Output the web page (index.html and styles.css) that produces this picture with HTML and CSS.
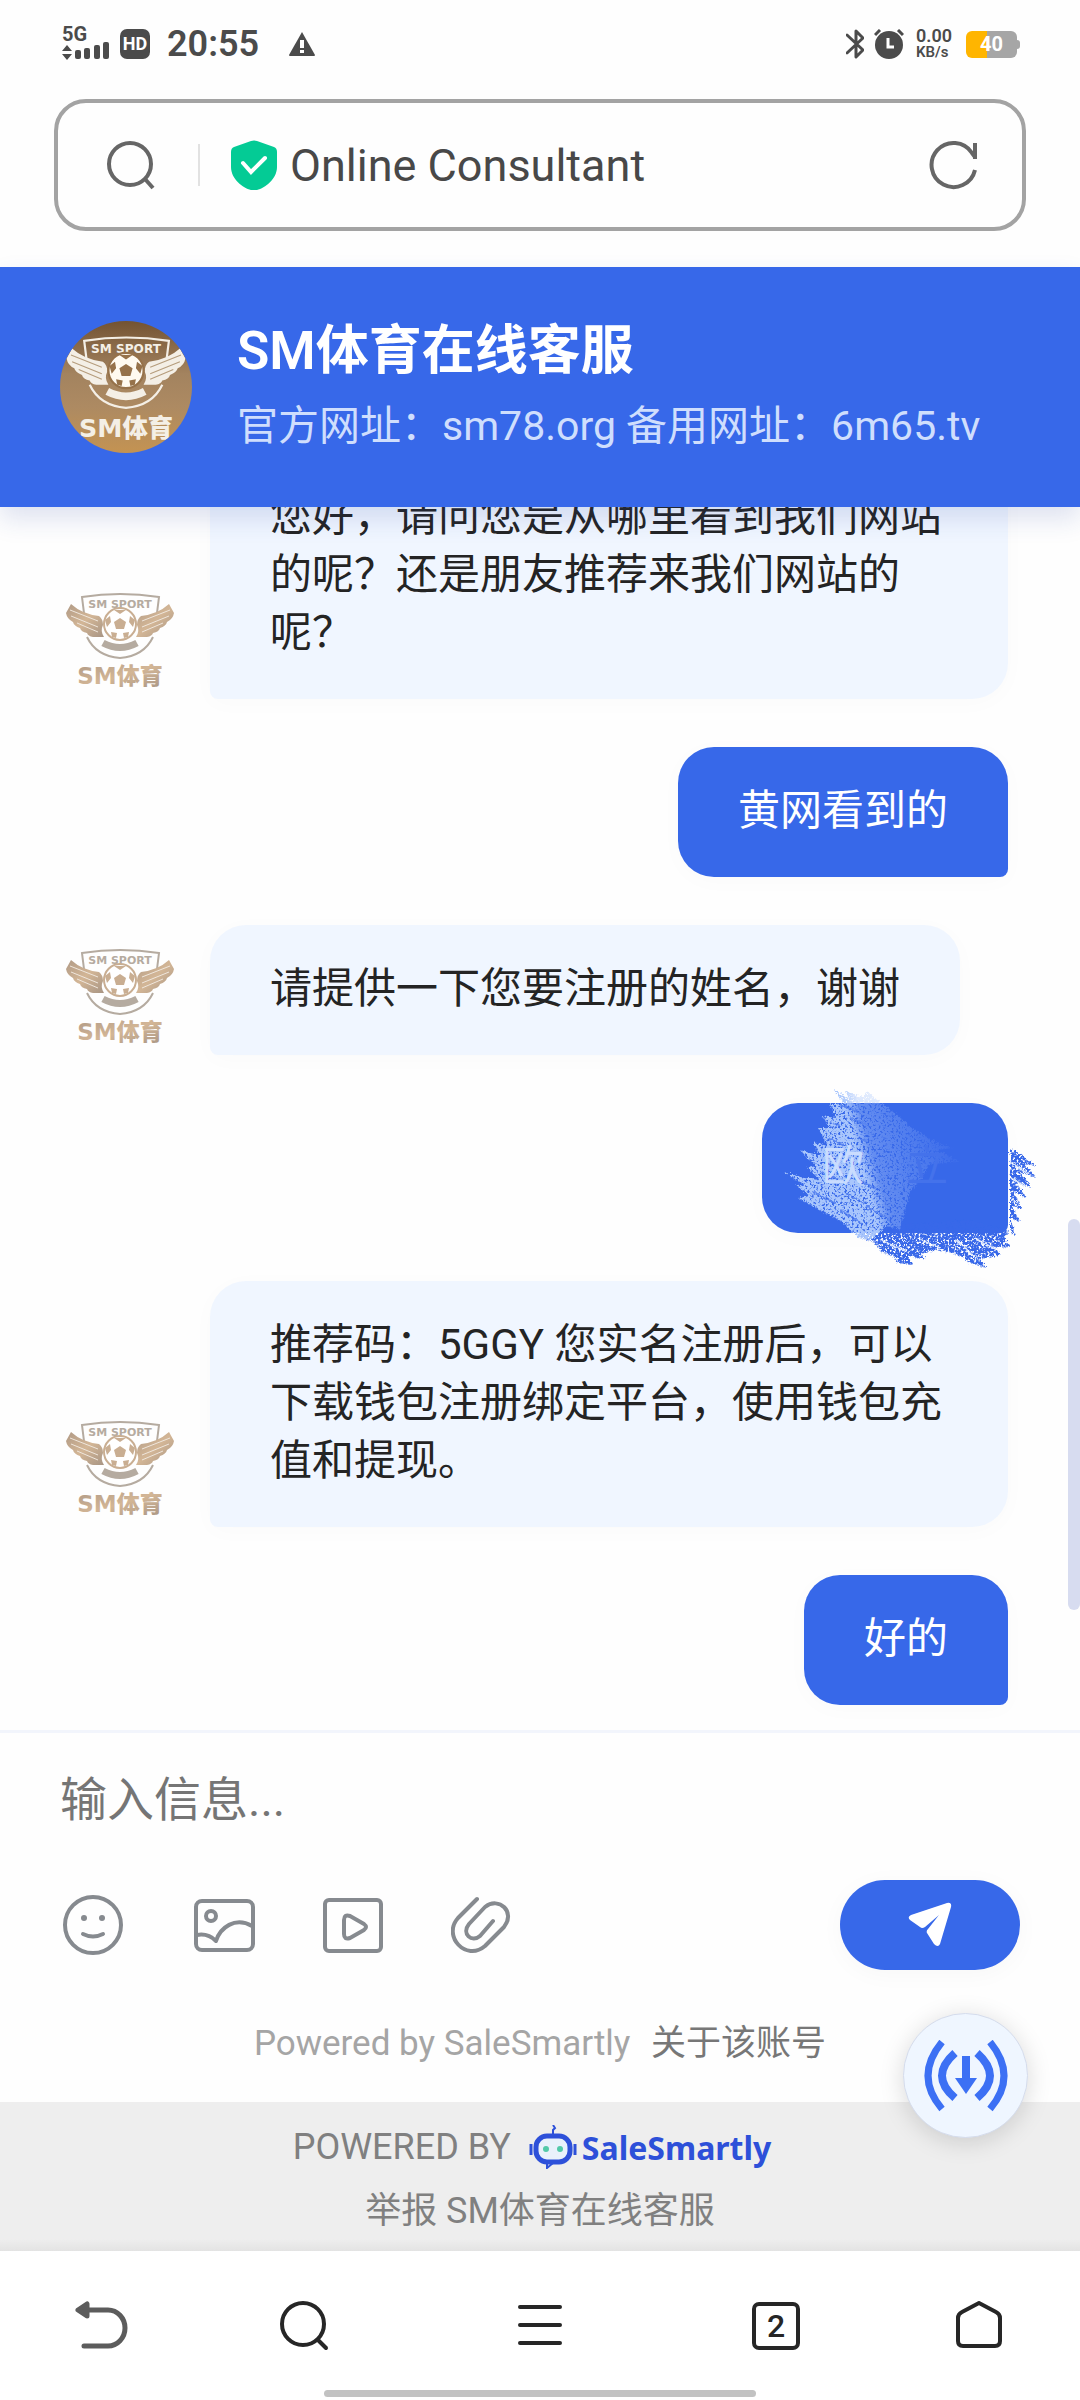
FILE: index.html
```html
<!DOCTYPE html>
<html lang="zh-CN">
<head>
  <meta charset="UTF-8">
  <meta name="viewport" content="width=device-width, initial-scale=1.0">
  <title>Online Consultant</title>
  <link rel="stylesheet" href="styles.css">
</head>
<body>
  <!-- shared club logo -->
  <svg class="defs" aria-hidden="true">
    <defs>
      <linearGradient id="gold" x1="0" y1="0" x2="1" y2="1">
        <stop offset="0" stop-color="#b09a86"/>
        <stop offset="0.5" stop-color="#d3b696"/>
        <stop offset="1" stop-color="#a89584"/>
      </linearGradient>
      <symbol id="club-logo" viewBox="0 0 120 120">
        <path class="logo-line" d="M24 34L22 18Q60 12 99 18L97 34M27 58Q36 77 60 79Q84 77 93 58"/>
        <text class="logo-sport" x="60" y="29" text-anchor="middle">SM SPORT</text>
        <path class="logo-fill" d="M11 25Q22 35 39 37Q43 40 43 46Q40 52 44 58L33 58Q28 57 27 54Q21 53 20 49Q14 47 13 43Q7 40 6 34Z"/>
        <path class="logo-fill" d="M109 25Q98 35 81 37Q77 40 77 46Q80 52 76 58L87 58Q92 57 93 54Q99 53 100 49Q106 47 107 43Q113 40 114 34Z"/>
        <path class="logo-feather" d="M10 31L38 42M11 37L38 48M17 44L38 53M110 31L82 42M109 37L82 48M103 44L82 53"/>
        <circle class="logo-ball" cx="60" cy="45" r="16"/>
        <path class="logo-patch" d="M60 39L66 43L64 50H56L54 43ZM54 31H66L60 35ZM45 41L50 37L51 43L47 48ZM75 41L70 37L69 43L73 48ZM51 53L57 54L56 59L52 58ZM69 53L63 54L64 59L68 58Z"/>
        <path class="logo-banner" d="M43 64Q60 73 77 64"/>
        <text class="logo-name" x="60" y="105" text-anchor="middle">SM体育</text>
      </symbol>
    </defs>
  </svg>

  <div class="page">
    <div class="status-bar">
      <div class="status-left">
        <svg width="48" height="46" viewBox="0 -6 48 46" aria-label="5G">
          <text class="net-type" x="0" y="14">5G</text>
          <path d="M0 24L5 18L10 24ZM0 27H10L5 33Z"/>
          <rect x="13" y="23" width="6" height="9" rx="2"/>
          <rect x="22" y="21" width="6" height="11" rx="2"/>
          <rect x="32" y="18" width="6" height="14" rx="2"/>
          <rect x="41" y="15" width="6" height="17" rx="2"/>
        </svg>
        <span class="hd">HD</span>
        <span class="time">20:55</span>
        <svg class="warn" width="26" height="24" viewBox="0 0 26 24">
          <path d="M13 0L26 23Q26 24 25 24H1Q0 24 0 23Z"/>
          <path d="M13 8V16M13 18V21" stroke="#fff" stroke-width="4"/>
        </svg>
      </div>
      <div class="status-right">
        <svg width="18" height="30" viewBox="0 0 18 30">
          <path d="M1 6L17 21L10 28V2L17 9L1 24" fill="none" stroke="#4b4b4b" stroke-width="3" stroke-linejoin="round" stroke-linecap="round"/>
        </svg>
        <svg width="30" height="30" viewBox="0 0 30 30">
          <circle cx="15" cy="16" r="14"/>
          <path d="M1 6L6 1M29 6L24 1" stroke="#4b4b4b" stroke-width="3"/>
          <path d="M14 9V18H20" fill="none" stroke="#fff" stroke-width="3"/>
        </svg>
        <span class="speed"><b>0.00</b><b class="unit">KB/s</b></span>
        <span class="battery">40</span>
      </div>
    </div>

    <div class="address-bar">
      <svg width="50" height="50" viewBox="0 0 50 50" class="line-icon">
        <circle cx="24" cy="24" r="21"/>
        <path d="M39 39L47 48"/>
      </svg>
      <span class="divider"></span>
      <svg width="46" height="50" viewBox="0 0 46 50">
        <path d="M20 1Q23 0 26 1L43 7Q46 8 46 12V27C46 39 34 48 26 50Q23 51 20 50C12 48 0 39 0 27V12Q0 8 3 7Z" fill="#04cb95"/>
        <path d="M12 23L20 32L34 18" fill="none" stroke="#fff" stroke-width="4" stroke-linecap="round"/>
      </svg>
      <span class="site-title">Online Consultant</span>
      <button class="icon-btn" type="button" aria-label="Reload">
        <svg width="50" height="50" viewBox="0 0 50 50" class="line-icon">
          <path d="M46 30A22 22 0 1 1 43 13L46 17M46 3V19"/>
        </svg>
      </button>
    </div>

    <header class="chat-header">
      <span class="avatar avatar-large"><svg viewBox="0 0 120 120"><use href="#club-logo"/></svg></span>
      <div>
        <h1>SM体育在线客服</h1>
        <p>官方网址：sm78.org 备用网址：6m65.tv</p>
      </div>
    </header>

    <main class="chat">
      <div class="message agent">
        <span class="avatar"><svg viewBox="0 0 120 120"><use href="#club-logo"/></svg></span>
        <p class="bubble">您好，请问您是从哪里看到我们网站的呢？还是朋友推荐来我们网站的呢？</p>
      </div>
      <div class="message visitor">
        <p class="bubble">黄网看到的</p>
      </div>
      <div class="message agent">
        <span class="avatar"><svg viewBox="0 0 120 120"><use href="#club-logo"/></svg></span>
        <p class="bubble">请提供一下您要注册的姓名，谢谢</p>
      </div>
      <div class="message visitor">
        <p class="bubble scribbled">
          <svg class="scribble" width="280" height="195" viewBox="0 0 280 195" aria-hidden="true">
            <defs>
              <linearGradient id="fade" gradientUnits="userSpaceOnUse" x1="95" y1="100" x2="185" y2="75">
                <stop offset="0" stop-color="#a9c6fc"/>
                <stop offset="0.15" stop-color="#a9c6fc" stop-opacity="0.4"/>
                <stop offset="1" stop-color="#a9c6fc" stop-opacity="0.05"/>
              </linearGradient>
              <filter id="speckle" x="-10%" y="-10%" width="120%" height="120%">
                <feTurbulence type="fractalNoise" baseFrequency="0.45" numOctaves="2" seed="8" result="dots"/>
                <feColorMatrix in="dots" values="0 0 0 0 0  0 0 0 0 0  0 0 0 0 0  0 6 0 0 -1.9" result="mask"/>
                <feDisplacementMap in="SourceGraphic" in2="dots" scale="6" xChannelSelector="R" yChannelSelector="G" result="rough"/>
                <feComposite in="rough" in2="mask" operator="in"/>
              </filter>
            </defs>
            <!-- blue stroke running past the bubble -->
            <g filter="url(#speckle)">
              <path fill="#3768e9" d="M84 148L96 160L104 162L112 172L124 177L128 183L143 185L138 176L156 180L152 174L166 170L188 175L200 183L216 188L210 179L230 176L226 168L240 167L234 158L240 152V69L250 74L266 86L254 84L266 98L250 92L262 108L246 102L256 118L244 112L252 130L242 126L250 142L240 138L246 156L236 150L200 140Z"/>
              <path class="scratch light-scratch" d="M110 160L136 172M150 160L170 168M186 160L208 180M204 158L226 170M240 82L258 94M241 98L254 106M241 118L248 124"/>
            </g>
            <!-- pale stroke over the name -->
            <g filter="url(#speckle)">
              <path fill="url(#fade)" d="M63 9L78 18L76 11L92 17L97 11L112 24L126 34L140 46L158 58L182 68L168 70L190 82L160 84L150 100L140 112L130 150L118 146L100 160L88 158L72 142L50 130L28 118L40 116L24 104L36 106L13 92L34 98L50 100L38 88L46 86L30 70L50 76L42 62L58 66L48 48L60 48L52 36L66 38L60 24L74 24Z"/>
              <path class="scratch" d="M68 24L88 32M80 38L98 46M58 58L74 66M50 92L68 100M42 112L66 124M74 112L94 124M84 98L108 110M70 130L92 144M96 126L122 142M64 44L70 47M88 58L98 62M54 82L64 86"/>
            </g>
          </svg>
          <span class="smudged">欧<span class="hidden-name">　立</span></span>
        </p>
      </div>
      <div class="message agent">
        <span class="avatar"><svg viewBox="0 0 120 120"><use href="#club-logo"/></svg></span>
        <p class="bubble">推荐码：5GGY 您实名注册后，可以下载钱包注册绑定平台，使用钱包充值和提现。</p>
      </div>
      <div class="message visitor">
        <p class="bubble">好的</p>
      </div>
      <span class="scroll-thumb"></span>
    </main>

    <form class="composer">
      <input class="message-input" type="text" placeholder="输入信息..." aria-label="输入信息">
      <div class="tools">
        <button class="icon-btn" type="button" aria-label="表情">
          <svg width="64" height="64" viewBox="0 0 64 64" class="tool-icon">
            <circle cx="32" cy="32" r="28"/>
            <path d="M22 41Q32 46 42 41"/>
            <circle cx="23" cy="25" r="3" class="dot"/>
            <circle cx="41" cy="25" r="3" class="dot"/>
          </svg>
        </button>
        <button class="icon-btn" type="button" aria-label="图片">
          <svg width="64" height="64" viewBox="0 0 64 64" class="tool-icon">
            <rect x="5" y="8" width="57" height="49" rx="6"/>
            <circle cx="20" cy="23" r="5"/>
            <path d="M6 42Q17 40 25 48C29 35 44 23 61 33"/>
          </svg>
        </button>
        <button class="icon-btn" type="button" aria-label="视频">
          <svg width="64" height="64" viewBox="0 0 64 64" class="tool-icon">
            <rect x="4" y="7" width="56" height="51" rx="4"/>
            <path d="M23 27Q23 21 29 23L43 31Q47 34 43 37L29 45Q23 47 23 41Z"/>
          </svg>
        </button>
        <button class="icon-btn" type="button" aria-label="附件">
          <svg width="64" height="64" viewBox="0 0 64 64" class="tool-icon">
            <path d="M26 6L7 25C-9 43 15 69 34 53L53 34C65 19 48 3 34 14L18 31C10 41 21 50 29 43L42 28"/>
          </svg>
        </button>
        <button class="send" type="submit" aria-label="发送">
          <svg width="44" height="46" viewBox="0 0 44 46">
            <path d="M3 13L39 1Q44 0 43 5L32 42Q30 46 26 42L19 31Q18 29 20 27L31 13L17 25Q14 27 12 25L2 18Q-1 15 3 13Z"/>
          </svg>
        </button>
      </div>
      <p class="powered">Powered by SaleSmartly <a href="#">关于该账号</a></p>
    </form>

    <footer class="brand">
      <div class="brand-row">
        <span>POWERED BY</span>
        <span class="brand-logo">
          <svg width="48" height="44" viewBox="0 0 48 44">
            <path d="M24 0L26 3L24 5V10M18 38V43L24 38" fill="none" stroke="#2d50d9" stroke-width="2"/>
            <rect x="7" y="11" width="34" height="26" rx="11" fill="#e9f1fb" stroke="#2d50d9" stroke-width="5"/>
            <path d="M2 19V30M46 19V30" stroke="#2d50d9" stroke-width="3"/>
            <circle cx="17" cy="24" r="3" fill="#53c9a8"/>
            <circle cx="31" cy="24" r="3" fill="#53c9a8"/>
          </svg>
          <b>SaleSmartly</b>
        </span>
      </div>
      <a class="report" href="#">举报 SM体育在线客服</a>
      <button class="float-btn" type="button" aria-label="下载">
        <svg width="84" height="72" viewBox="0 0 84 72">
          <path d="M18 2Q-10 36 18 69M66 2Q94 36 66 69" fill="none" stroke="#3c70f4" stroke-width="7"/>
          <path d="M31 13Q5 36 31 58M53 13Q79 36 53 58" fill="none" stroke="#3c70f4" stroke-width="8"/>
          <path d="M38 16H46V38H53L42 54L31 38H38Z" fill="#3c70f4"/>
        </svg>
      </button>
    </footer>

    <nav class="browser-nav">
      <button class="icon-btn" type="button" aria-label="Back">
        <svg width="54" height="50" viewBox="0 0 54 50" class="nav-icon back">
          <path d="M13 9H33A17 18 0 0 1 33 45H9"/>
          <path d="M3 9L12 3V15Z" fill="#5c5c5c"/>
        </svg>
      </button>
      <button class="icon-btn" type="button" aria-label="Search">
        <svg width="50" height="50" viewBox="0 0 50 50" class="nav-icon">
          <circle cx="24" cy="23" r="21"/>
          <path d="M39 39L47 47"/>
        </svg>
      </button>
      <button class="icon-btn" type="button" aria-label="Menu">
        <svg width="50" height="50" viewBox="0 0 50 50" class="nav-icon">
          <path d="M5 6H45M5 24H45M5 42H45"/>
        </svg>
      </button>
      <button class="tabs" type="button" aria-label="Tabs">2</button>
      <button class="icon-btn" type="button" aria-label="Home">
        <svg width="50" height="50" viewBox="0 0 50 50" class="nav-icon">
          <path d="M26 2L43 11Q47 13 47 17V40Q47 45 42 45H10Q5 45 5 40V17Q5 13 9 11Z"/>
        </svg>
      </button>
      <span class="gesture-bar"></span>
    </nav>
  </div>
</body>
</html>
```

FILE: styles.css
```css
* {
  box-sizing: border-box;
}
body {
  margin: 0;
  font-family: 'Roboto', 'Noto Sans CJK SC', sans-serif;
  color: #242424;
  background-color: #fefefe;
}
h1, p {
  margin: 0;
}
button {
  padding: 0;
  border: none;
  background: none;
  font-family: inherit;
  cursor: pointer;
}
svg {
  display: block;
  flex-shrink: 0;
}
.defs {
  position: absolute;
  width: 0;
  height: 0;
}
.page {
  display: flex;
  flex-direction: column;
  height: 100vh;
  overflow: hidden;
}

/* status bar */
.status-bar {
  display: flex;
  justify-content: space-between;
  padding: 26px 60px 0 62px;
  height: 99px;
  color: #4b4b4b;
  fill: #4b4b4b;
}
.status-left, .status-right {
  display: flex;
  align-items: center;
  height: 36px;
}
.net-type {
  font-size: 20px;
  font-weight: 700;
}
.hd {
  margin-left: 10px;
  width: 30px;
  height: 30px;
  border-radius: 7px;
  background-color: #4b4b4b;
  font-size: 18px;
  font-weight: 700;
  line-height: 30px;
  text-align: center;
  color: #fff;
}
.time {
  margin-left: 17px;
  font-size: 36px;
  font-weight: 600;
  line-height: 40px;
}
.warn {
  margin-left: 30px;
}
.status-right {
  gap: 10px;
}
.speed {
  display: flex;
  flex-direction: column;
  margin: 0 4px 0 2px;
  font-size: 18px;
  line-height: 17px;
}
.speed b {
  font-weight: 600;
}
.speed .unit {
  font-size: 15px;
}
.battery {
  position: relative;
  margin-right: 3px;
  width: 51px;
  height: 27px;
  border-radius: 6px;
  background: linear-gradient(90deg, #ffb500 42%, #a6a6a6 42%);
  font-size: 20px;
  font-weight: 700;
  line-height: 27px;
  text-align: center;
  color: #fff;
}
.battery::after {
  content: "";
  position: absolute;
  right: -3px;
  top: 9px;
  width: 4px;
  height: 9px;
  border-radius: 0 3px 3px 0;
  background-color: #a6a6a6;
}

/* address bar */
.address-bar {
  display: flex;
  align-items: center;
  margin: 0 54px 36px;
  padding: 0 43px 0 48px;
  height: 132px;
  border: 4px solid #a3a3a3;
  border-radius: 32px;
}
.line-icon {
  fill: none;
  stroke: #666;
  stroke-width: 4;
}
.divider {
  margin: 0 31px 0 42px;
  width: 2px;
  height: 42px;
  background-color: #e2e2e2;
}
.site-title {
  flex: 1;
  margin-left: 13px;
  font-size: 45px;
  color: #484848;
}

/* chat header */
.chat-header {
  position: relative;
  z-index: 1;
  display: flex;
  flex-shrink: 0;
  align-items: center;
  gap: 45px;
  padding: 0 60px;
  height: 240px;
  background-color: #3768e9;
  box-shadow: 0 12px 24px rgba(40, 70, 160, 0.15);
  color: #fff;
}
.chat-header h1 {
  font-size: 53px;
  font-weight: 600;
  line-height: 78px;
}
.chat-header p {
  font-size: 41px;
  line-height: 72px;
  color: #cfdefd;
}
.avatar {
  --logo-fill: url(#gold);
  --logo-line: #b5aba0;
  --logo-ball: #fff;
  --logo-patch: #c9ae92;
  --logo-feather: #efe6dc;
  flex-shrink: 0;
  width: 120px;
  height: 120px;
  border-radius: 50%;
}
.avatar-large {
  --logo-fill: #f4efe6;
  --logo-line: #f4efe6;
  --logo-ball: #fffaf0;
  --logo-patch: #96724a;
  --logo-feather: #b59c7c;
  width: 132px;
  height: 132px;
  background: linear-gradient(#735333, #a3835f 40%, #ad8a62 65%, #c49352);
  overflow: hidden;
}
.logo-line {
  fill: none;
  stroke: var(--logo-line);
  stroke-width: 2;
}
.logo-fill {
  fill: var(--logo-fill);
}
.logo-patch {
  fill: var(--logo-patch);
}
.logo-feather {
  fill: none;
  stroke: var(--logo-feather);
  stroke-width: 1;
}
.logo-ball {
  fill: var(--logo-ball);
  stroke: var(--logo-patch);
  stroke-width: 2;
}
.logo-banner {
  fill: none;
  stroke: var(--logo-line);
  stroke-width: 7;
}
.logo-sport {
  font-family: 'DejaVu Sans', sans-serif;
  font-size: 11px;
  font-weight: 700;
  fill: var(--logo-line);
}
.logo-name {
  font-family: 'DejaVu Sans', 'Noto Sans CJK SC', sans-serif;
  font-size: 23px;
  font-weight: 900;
  fill: var(--logo-fill);
}

/* messages */
.chat {
  position: relative;
  display: flex;
  flex: 1;
  flex-direction: column;
  justify-content: flex-end;
  gap: 48px;
  min-height: 0;
  padding: 0 72px 25px 60px;
  overflow: hidden;
}
.message {
  display: flex;
  flex-shrink: 0;
  align-items: flex-end;
  gap: 30px;
}
.visitor {
  justify-content: flex-end;
}
.bubble {
  padding: 35px 60px 37px;
  border-radius: 36px 36px 36px 8px;
  background-color: #f0f6ff;
  box-shadow: 0 4px 24px rgba(0, 0, 0, 0.02);
  font-size: 42px;
  line-height: 58px;
}
.visitor .bubble {
  border-radius: 36px 36px 8px 36px;
  background-color: #3768e9;
  color: #fff;
}
.scribbled {
  position: relative;
}
.scribble {
  position: absolute;
  left: 8px;
  top: -23px;
  overflow: visible;
}
.scratch {
  fill: none;
  stroke: #5a85f0;
  stroke-width: 2;
}
.light-scratch {
  stroke: #dbe6fd;
}
.smudged {
  position: relative;
  color: #c9dcfe;
}
.hidden-name {
  color: #4472eb;
}
.scroll-thumb {
  position: absolute;
  right: 0;
  bottom: 120px;
  width: 12px;
  height: 32%;
  border-radius: 6px;
  background-color: #d7dcf0;
}

/* composer */
.composer {
  flex-shrink: 0;
  border-top: 3px solid #f2f5fc;
}
.message-input {
  display: block;
  width: 100%;
  height: 132px;
  padding: 0 60px;
  border: none;
  outline: none;
  background: none;
  font-family: inherit;
  font-size: 47px;
}
.message-input::placeholder {
  color: #757575;
}
.tools {
  display: flex;
  align-items: center;
  gap: 66px;
  padding: 15px 60px 0 61px;
}
.tool-icon {
  fill: none;
  stroke: #868a8f;
  stroke-width: 4;
  stroke-linecap: round;
  stroke-linejoin: round;
}
.tool-icon .dot {
  fill: #868a8f;
  stroke: none;
}
.send {
  display: flex;
  align-items: center;
  justify-content: center;
  margin-left: auto;
  width: 180px;
  height: 90px;
  border-radius: 45px;
  background-color: #3768e9;
  box-shadow: 0 4px 24px rgba(0, 0, 0, 0.03);
  fill: #fff;
}
.powered {
  padding: 54px 0 38px;
  font-size: 35px;
  line-height: 40px;
  text-align: center;
  color: #a5a5a5;
}
.powered a {
  margin-left: 12px;
  color: #777;
  text-decoration: none;
}

/* brand footer */
.brand {
  position: relative;
  display: flex;
  flex-direction: column;
  flex-shrink: 0;
  align-items: center;
  padding-top: 15px;
  height: 149px;
  background: linear-gradient(#eee 92%, #e3e3e3);
  font-size: 36px;
  color: #808080;
}
.brand-row {
  display: flex;
  align-items: center;
  gap: 18px;
  margin-right: 16px;
  height: 60px;
}
.brand-logo {
  display: flex;
  align-items: center;
  gap: 5px;
  font-family: 'Noto Sans', sans-serif;
  font-size: 32px;
  color: #2d50d9;
}
.report {
  line-height: 68px;
  color: #808080;
  text-decoration: none;
}
.float-btn {
  position: absolute;
  right: 52px;
  top: -89px;
  display: flex;
  align-items: center;
  justify-content: center;
  width: 125px;
  height: 125px;
  border: 1px solid #d5dcec;
  border-radius: 50%;
  background-color: #eff6ff;
  box-shadow: 0 4px 24px rgba(0, 0, 0, 0.15);
}

/* browser nav */
.browser-nav {
  position: relative;
  display: grid;
  grid-template-columns: 51fr 50fr 68fr 50fr 51fr;
  flex-shrink: 0;
  align-items: center;
  justify-items: center;
  height: 149px;
  background-color: #fff;
}
.nav-icon {
  fill: none;
  stroke: #262626;
  stroke-width: 4;
  stroke-linecap: round;
  stroke-linejoin: round;
}
.back {
  stroke: #5c5c5c;
  stroke-width: 5;
}
.tabs {
  width: 48px;
  height: 48px;
  border: 4px solid #262626;
  border-radius: 7px;
  font-size: 32px;
  font-weight: 500;
  line-height: 40px;
  color: #262626;
}
.gesture-bar {
  position: absolute;
  left: 30%;
  bottom: 3px;
  width: 40%;
  height: 7px;
  border-radius: 4px;
  background-color: #c2c2c2;
}
```
